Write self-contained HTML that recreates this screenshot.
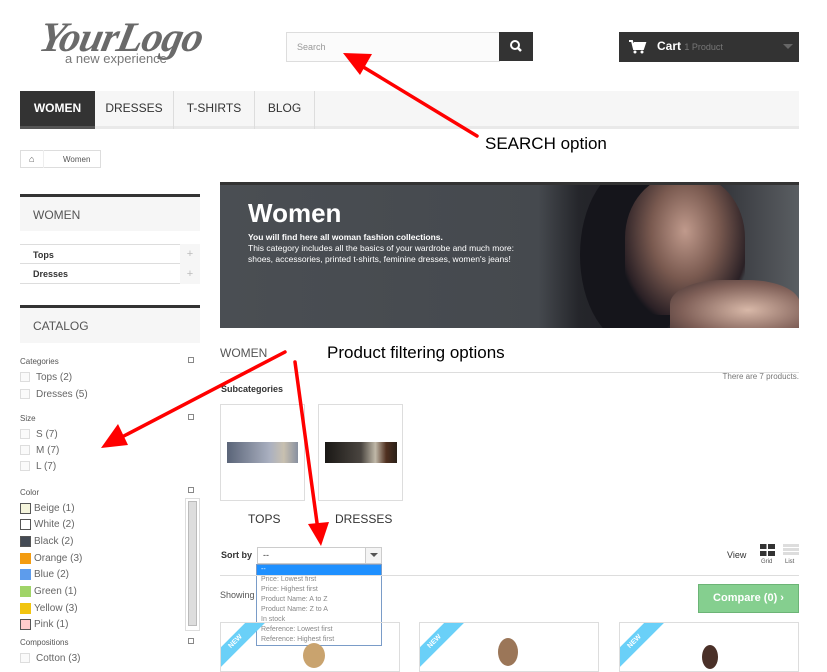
<!DOCTYPE html>
<html><head><meta charset="utf-8"><style>
*{margin:0;padding:0;box-sizing:border-box}
body{width:827px;height:663px;overflow:hidden;background:#fff;font-family:"Liberation Sans",Arial,sans-serif;position:relative;color:#333}
.a{position:absolute}
.cb{position:absolute;width:10px;height:10px;border:1px solid #ddd;background:#fafafa}
.sw{position:absolute;width:11px;height:11px;border:1px solid #555}
.lt{position:absolute;font-size:10px;color:#666}
.hd{position:absolute;font-size:8px;color:#555}
.pm{position:absolute;width:6px;height:6px;border:1px solid #888;left:188px}
</style></head><body>
<!-- logo -->
<div class="a" style="left:40px;top:14px;font-family:'Liberation Serif',serif;font-style:italic;font-weight:bold;font-size:42px;color:#6a6a6a;letter-spacing:-1px;transform:skewX(-12deg)">YourLogo</div>
<div class="a" style="left:65px;top:51px;font-size:13px;color:#777">a new experience</div>
<!-- search -->
<div class="a" style="left:286px;top:32px;width:214px;height:30px;border:1px solid #ddd;background:#fbfbfb;font-size:9px;color:#999;padding:9px 10px">Search</div>
<div class="a" style="left:499px;top:32px;width:34px;height:29px;background:#333"><svg width="34" height="29"><circle cx="16" cy="13" r="4" stroke="#fff" stroke-width="2" fill="none"/><line x1="19" y1="16" x2="22" y2="19" stroke="#fff" stroke-width="2.5"/></svg></div>
<!-- cart -->
<div class="a" style="left:619px;top:32px;width:180px;height:30px;background:#333"><svg class="a" style="left:10px;top:8px" width="18" height="14"><path d="M0 1h3l2 8h9l2-6H5" stroke="#fff" stroke-width="2" fill="#fff"/><circle cx="6" cy="12" r="1.5" fill="#fff"/><circle cx="13" cy="12" r="1.5" fill="#fff"/></svg><span class="a" style="left:38px;top:7px;color:#fff;font-weight:bold;font-size:12px">Cart <span style="color:#777;font-size:9px;font-weight:normal">1 Product</span></span><div class="a" style="left:164px;top:12px;border:5px solid transparent;border-top-color:#666"></div></div>
<!-- nav -->
<div class="a" style="left:20px;top:91px;width:779px;height:38px;background:#f6f6f6;border-bottom:3px solid #e9e9e9"></div>
<div class="a" style="left:20px;top:91px;width:75px;height:38px;background:#333;border-bottom:3px solid #555;color:#fff;font-weight:bold;font-size:12px;text-align:center;line-height:34px">WOMEN</div>
<div class="a" style="left:95px;top:91px;width:79px;height:38px;border-right:1px solid #ddd;font-size:12px;text-align:center;line-height:34px">DRESSES</div>
<div class="a" style="left:174px;top:91px;width:81px;height:38px;border-right:1px solid #ddd;font-size:12px;text-align:center;line-height:34px">T-SHIRTS</div>
<div class="a" style="left:255px;top:91px;width:60px;height:38px;border-right:1px solid #ddd;font-size:12px;text-align:center;line-height:34px">BLOG</div>
<!-- breadcrumb -->
<div class="a" style="left:20px;top:150px;width:81px;height:18px;border:1px solid #ddd;font-size:8px;color:#555"><span class="a" style="left:8px;top:3px;font-size:9px">⌂</span><span class="a" style="left:22px;top:-1px;width:16px;height:18px;border-left:1px solid #eee;"></span><span class="a" style="left:42px;top:4px">Women</span></div>
<div class="a" style="left:485px;top:134px;font-size:17px;color:#000">SEARCH option</div>
<!-- left col -->
<div class="a" style="left:20px;top:194px;width:180px;height:37px;background:#f6f6f6;border-top:3px solid #333;font-size:12px;padding:11px 13px;color:#555">WOMEN</div>
<div class="a" style="left:20px;top:244px;width:180px;height:20px;border-top:1px solid #ddd;border-bottom:1px solid #ddd;font-size:9px;font-weight:bold;padding:5px 13px">Tops</div>
<div class="a" style="left:20px;top:264px;width:180px;height:20px;border-bottom:1px solid #ddd;font-size:9px;font-weight:bold;padding:5px 13px">Dresses</div>
<div class="a" style="left:180px;top:244px;width:20px;height:40px;background:#f6f6f6;color:#bbb;font-size:11px;text-align:center;line-height:20px">+<br>+</div>
<div class="a" style="left:20px;top:305px;width:180px;height:38px;background:#f6f6f6;border-top:3px solid #333;font-size:12px;padding:11px 13px;color:#555">CATALOG</div>
<div class="hd" style="left:20px;top:357px">Categories</div><div class="pm" style="top:357px"></div>
<div class="cb" style="left:20px;top:372px"></div><div class="lt" style="left:36px;top:372px">Tops (2)</div>
<div class="cb" style="left:20px;top:389px"></div><div class="lt" style="left:36px;top:389px">Dresses (5)</div>
<div class="hd" style="left:20px;top:414px">Size</div><div class="pm" style="top:414px"></div>
<div class="cb" style="left:20px;top:429px"></div><div class="lt" style="left:36px;top:429px">S (7)</div>
<div class="cb" style="left:20px;top:445px"></div><div class="lt" style="left:36px;top:445px">M (7)</div>
<div class="cb" style="left:20px;top:461px"></div><div class="lt" style="left:36px;top:461px">L (7)</div>
<div class="hd" style="left:20px;top:488px">Color</div><div class="pm" style="top:487px"></div>
<div class="a" style="left:185px;top:498px;width:15px;height:133px;border:1px solid #ddd"><div style="margin:2px;height:125px;background:#ddd;border:1px solid #bbb"></div></div>
<div class="sw" style="left:20px;top:503px;background:#f5f5dc"></div><div class="lt" style="left:34px;top:503px">Beige (1)</div>
<div class="sw" style="left:20px;top:519px;background:#fff"></div><div class="lt" style="left:34px;top:519px">White (2)</div>
<div class="sw" style="left:20px;top:536px;background:#434a54"></div><div class="lt" style="left:34px;top:536px">Black (2)</div>
<div class="sw" style="left:20px;top:553px;background:#f39c11;border-color:#f39c11"></div><div class="lt" style="left:34px;top:553px">Orange (3)</div>
<div class="sw" style="left:20px;top:569px;background:#5d9cec;border-color:#5d9cec"></div><div class="lt" style="left:34px;top:569px">Blue (2)</div>
<div class="sw" style="left:20px;top:586px;background:#a0d468;border-color:#a0d468"></div><div class="lt" style="left:34px;top:586px">Green (1)</div>
<div class="sw" style="left:20px;top:603px;background:#f1c40f;border-color:#f1c40f"></div><div class="lt" style="left:34px;top:603px">Yellow (3)</div>
<div class="sw" style="left:20px;top:619px;background:#fcc"></div><div class="lt" style="left:34px;top:619px">Pink (1)</div>
<div class="hd" style="left:20px;top:638px">Compositions</div><div class="pm" style="top:638px"></div>
<div class="cb" style="left:20px;top:653px"></div><div class="lt" style="left:36px;top:653px">Cotton (3)</div>
<!-- banner -->
<div class="a" style="left:220px;top:182px;width:579px;height:146px;border-top:3px solid #333;background:linear-gradient(90deg,#4a4e53 0%,#45494e 55%,#25262b 62%,#1c1c22 78%,#5a5e62 100%);overflow:hidden">
<div class="a" style="left:360px;top:-20px;width:110px;height:180px;border-radius:50%;background:#15151b"></div>
<div class="a" style="left:405px;top:-10px;width:120px;height:140px;border-radius:45% 45% 30% 30%;background:radial-gradient(ellipse at 50% 40%,#c09a8c 0%,#7a5a50 40%,#2a2025 75%,transparent 80%)"></div>
<div class="a" style="left:450px;top:95px;width:130px;height:60px;border-radius:40% 40% 0 0;background:radial-gradient(ellipse at 60% 50%,#d8b8a8,#806058 60%,#403030)"></div>
<div class="a" style="left:28px;top:13px;color:#fff;font-weight:bold;font-size:26px">Women</div>
<div class="a" style="left:28px;top:47px;color:#fff;font-size:8.5px;line-height:11px"><b>You will find here all woman fashion collections.</b><br>This category includes all the basics of your wardrobe and much more:<br>shoes, accessories, printed t-shirts, feminine dresses, women's jeans!</div></div>
<div class="a" style="left:220px;top:346px;font-size:12px;color:#555">WOMEN</div>
<div class="a" style="left:327px;top:343px;font-size:17px;color:#000">Product filtering options</div>
<div class="a" style="left:220px;top:372px;width:579px;border-top:1px solid #ddd"></div>
<div class="a" style="left:650px;top:372px;width:149px;text-align:right;font-size:8px;color:#777">There are 7 products.</div>
<div class="a" style="left:221px;top:384px;font-size:9px;font-weight:bold">Subcategories</div>
<div class="a" style="left:220px;top:404px;width:85px;height:97px;border:1px solid #ddd"><div class="a" style="left:6px;top:37px;width:71px;height:21px;background:linear-gradient(90deg,#5a6478,#aab0c0 60%,#c8c0b0 80%,#8890a0)"></div></div>
<div class="a" style="left:318px;top:404px;width:85px;height:97px;border:1px solid #ddd"><div class="a" style="left:6px;top:37px;width:72px;height:21px;background:linear-gradient(90deg,#1a1815,#4a4540 50%,#c0b8a8 70%,#503020 85%,#2a2018)"></div></div>
<div class="a" style="left:248px;top:512px;font-size:12px">TOPS</div>
<div class="a" style="left:335px;top:512px;font-size:12px">DRESSES</div>
<div class="a" style="left:221px;top:550px;font-size:9px;font-weight:bold">Sort by</div>
<div class="a" style="left:257px;top:547px;width:125px;height:17px;border:1px solid #ccc;background:#fff;font-size:9px;padding:2px 5px">--<div class="a" style="right:0;top:0;width:16px;height:15px;border-left:1px solid #ccc;background:#f4f4f4"><div class="a" style="left:4px;top:5px;border:4px solid transparent;border-top-color:#555"></div></div></div>
<div class="a" style="left:256px;top:564px;width:126px;height:82px;border:1px solid #7a9cc8;background:#fff;font-size:7px;color:#888;line-height:10px"><div style="background:#1e90ff;color:#fff;height:10px;padding-left:4px">--</div><div style="padding-left:4px">Price: Lowest first<br>Price: Highest first<br>Product Name: A to Z<br>Product Name: Z to A<br>In stock<br>Reference: Lowest first<br>Reference: Highest first</div></div>
<div class="a" style="left:727px;top:550px;font-size:9px">View</div>
<div class="a" style="left:760px;top:544px;width:15px;height:12px;background:linear-gradient(90deg,#333 45%,transparent 45%,transparent 55%,#333 55%)"></div>
<div class="a" style="left:760px;top:549px;width:15px;height:2px;background:#fff"></div>
<div class="a" style="left:761px;top:559px;font-size:6px;color:#555">Grid</div>
<div class="a" style="left:783px;top:544px;width:16px;height:12px;background:repeating-linear-gradient(#ddd 0 3px,#fff 3px 4px)"></div>
<div class="a" style="left:785px;top:559px;font-size:6px;color:#555">List</div>
<div class="a" style="left:220px;top:575px;width:579px;border-top:1px solid #ddd"></div>
<div class="a" style="left:220px;top:590px;font-size:9px;color:#555">Showing</div>
<div class="a" style="left:698px;top:584px;width:101px;height:29px;background:#85cf8f;border:1px solid #6cb476;color:#fff;font-weight:bold;font-size:11px;text-align:center;line-height:27px">Compare (0) ›</div>
<div class="a" style="left:220px;top:622px;width:180px;height:50px;border:1px solid #ddd;overflow:hidden"><div class="a" style="left:-20px;top:12px;width:70px;height:14px;background:#6ad0f8;transform:rotate(-45deg);color:#fff;font-size:7px;font-weight:bold;text-align:center;line-height:14px">NEW</div><div class="a" style="left:82px;top:20px;width:22px;height:25px;border-radius:50%;background:#c9a36e"></div></div>
<div class="a" style="left:419px;top:622px;width:180px;height:50px;border:1px solid #ddd;overflow:hidden"><div class="a" style="left:-20px;top:12px;width:70px;height:14px;background:#6ad0f8;transform:rotate(-45deg);color:#fff;font-size:7px;font-weight:bold;text-align:center;line-height:14px">NEW</div><div class="a" style="left:78px;top:15px;width:20px;height:28px;border-radius:50%;background:#9b7658"></div></div>
<div class="a" style="left:619px;top:622px;width:180px;height:50px;border:1px solid #ddd;overflow:hidden"><div class="a" style="left:-20px;top:12px;width:70px;height:14px;background:#6ad0f8;transform:rotate(-45deg);color:#fff;font-size:7px;font-weight:bold;text-align:center;line-height:14px">NEW</div><div class="a" style="left:82px;top:22px;width:16px;height:24px;border-radius:50%;background:#4a3028"></div></div>
<!-- arrows -->
<svg class="a" style="left:0;top:0" width="827" height="663">
<g fill="#f00" stroke="#f00" stroke-linecap="round">
<line x1="477" y1="136" x2="360" y2="65" stroke-width="3.5"/>
<polygon points="343,53 372,54 360,75" stroke="none"/>
<line x1="285" y1="352" x2="120" y2="438" stroke-width="3.5"/>
<polygon points="101,448 118,424 128,445" stroke="none"/>
<line x1="295" y1="362" x2="318" y2="530" stroke-width="3.5"/>
<polygon points="321,546 308,524 329,522" stroke="none"/>
</g></svg>
</body></html>
